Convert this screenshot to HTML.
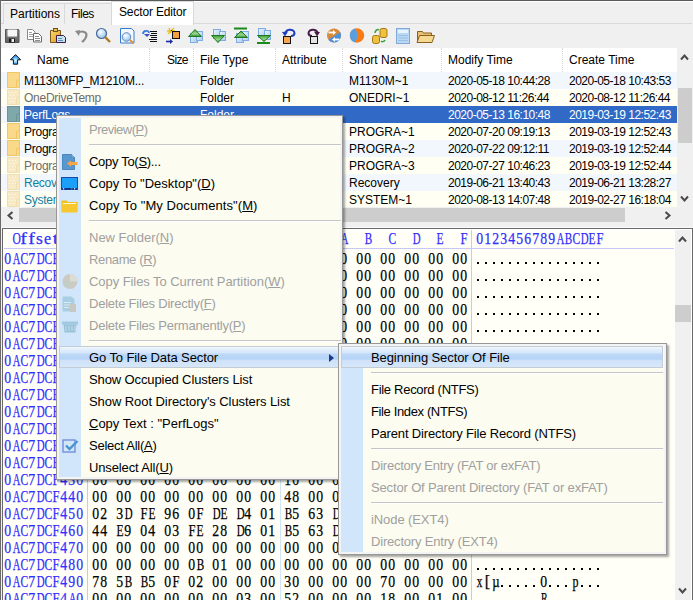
<!DOCTYPE html><html><head><meta charset="utf-8"><style>
*{margin:0;padding:0;box-sizing:border-box}
html,body{width:693px;height:600px;overflow:hidden;background:#f0f0f0;font-family:"Liberation Sans",sans-serif;font-size:12px;color:#000}
.a{position:absolute}
.t{position:absolute;white-space:pre;line-height:1}
.m{font-family:"Liberation Mono",monospace}
.hx{font-family:"Liberation Serif",serif;font-size:16px;-webkit-text-stroke:0.25px currentColor}
.hx i{font-style:normal;display:inline-block;width:8px;text-align:center}
.hx i.p{position:relative}
.hx i.p::after{content:"";position:absolute;left:1px;top:11px;width:2px;height:2px;background:#000}
.hx i.d{transform:translateX(-0.3px) scaleX(0.86)}
</style></head><body>
<div class="a" style="left:0px;top:0px;width:693px;height:1px;background:#5a5a5a"></div>
<div class="a" style="left:0px;top:1px;width:693px;height:1px;background:#fff"></div>
<div class="a" style="left:0px;top:0px;width:1px;height:600px;background:#6a6a6a"></div>
<div class="a" style="left:1px;top:23px;width:691px;height:1px;background:#d9d9d9"></div>
<div class="a" style="left:3px;top:3px;width:62px;height:21px;background:#f0f0f0;border:1px solid #d9d9d9;border-bottom:none"></div>
<div class="a" style="left:64px;top:3px;width:48px;height:21px;background:#f0f0f0;border:1px solid #d9d9d9;border-bottom:none"></div>
<div class="a" style="left:111px;top:1px;width:83px;height:24px;background:#fff;border:1px solid #d9d9d9;border-bottom:none"></div>
<div class="t" style="left:10px;top:8px;font-size:12px;color:#000;">Partitions</div>
<div class="t" style="left:71px;top:8px;font-size:12px;color:#000;letter-spacing:-0.5px">Files</div>
<div class="t" style="left:119px;top:6px;font-size:12px;color:#000;letter-spacing:-0.15px">Sector Editor</div>
<svg class="a" style="left:0;top:0" width="693" height="72">
<defs>
<linearGradient id="gy" x1="0" y1="0" x2="1" y2="1"><stop offset="0" stop-color="#ffe07a"/><stop offset="1" stop-color="#e0a020"/></linearGradient>
<linearGradient id="gb" x1="0" y1="0" x2="1" y2="1"><stop offset="0" stop-color="#eaf4ff"/><stop offset="1" stop-color="#a8cdf0"/></linearGradient>
<radialGradient id="gl" cx="0.4" cy="0.35" r="0.7"><stop offset="0" stop-color="#ffffff"/><stop offset="1" stop-color="#8cc0e8"/></radialGradient>
</defs>
<!-- 1 floppy -->
<linearGradient id="gf" x1="0" y1="0" x2="0" y2="1"><stop offset="0" stop-color="#8c8c8c"/><stop offset="1" stop-color="#5e5e5e"/></linearGradient>
<path d="M5.5 29.5h13l0.5 0.5v12.5h-13.5z" fill="url(#gf)" stroke="#555"/>
<rect x="7.5" y="29.5" width="9.5" height="7" fill="#f6f6f6"/>
<rect x="9" y="38.5" width="6" height="4" fill="#1a1a1a"/><rect x="11.5" y="39" width="2.5" height="3" fill="#f0f0f0"/>
<!-- 2 copy -->
<path d="M27.5 29.5h5l2.5 2.5v7.5h-7.5z" fill="#fff" stroke="#8a8a8a"/>
<path d="M29 32.5h3M29 34.5h4M29 36.5h4" stroke="#a0a0a0"/>
<path d="M33.5 33.5h5l3 3v5.5h-8z" fill="#fff" stroke="#6a6a6a"/>
<path d="M35 36.5h4M35 38.5h5M35 40.5h5" stroke="#8a8a8a"/>
<!-- 3 paste -->
<linearGradient id="gp" x1="0" y1="0" x2="1" y2="1"><stop offset="0" stop-color="#f8d870"/><stop offset="1" stop-color="#e09818"/></linearGradient>
<path d="M50.5 30.5h10v12h-10z" fill="url(#gp)" stroke="#7a5a20"/>
<rect x="53.5" y="28.5" width="4" height="3" fill="#e8c060" stroke="#6a5020"/>
<path d="M56.5 35.5h7l2 2v5h-9z" fill="#c8e2f2" stroke="#3a1a4a"/>
<path d="M58 38.5h4M58 40.5h5" stroke="#5a8ab0"/>
<!-- 4 undo gray -->
<path d="M78 33 C 82 30, 88 32, 86 37 C 85 40, 83 41, 82 42" fill="none" stroke="#8a8a8a" stroke-width="2.2"/>
<path d="M75 31 L80 30 L79 36 Z" fill="#8a8a8a"/>
<!-- 5 magnifier -->
<circle cx="101.5" cy="33.5" r="5" fill="url(#gl)" stroke="#4a6a9a" stroke-width="1.2"/>
<path d="M105 37 L110 42" stroke="#b07820" stroke-width="2.4"/>
<!-- 6 doc magnifier -->
<path d="M120.5 28.5h11l2.5 2.5v12h-13.5z" fill="#f4f9ff" stroke="#3a7ad0"/>
<circle cx="126.5" cy="37" r="4.3" fill="url(#gl)" stroke="#5a8ac0"/>
<path d="M130 40 L133 43" stroke="#d89030" stroke-width="2"/>
<!-- 7 list with arrow -->
<path d="M143 34 C 143 30, 149 30, 149 33" fill="none" stroke="#3a7ae0" stroke-width="1.8"/>
<path d="M144 34 h6 l-3 3z" fill="#3a50c0"/>
<path d="M150 31.5h7M151 33.5h6M150 35.5h7M151 37.5h6M149 39.5h8M150 41.5h7" stroke="#111"/>
<!-- 8 spark box -->
<path d="M169 28 L171 33 M167 31 L175 31 M168 34 L174 28" stroke="#e8c020" stroke-width="1.4"/>
<path d="M171 30 l2 2" stroke="#222"/>
<rect x="172.5" y="31.5" width="7" height="7" fill="#f5a040" stroke="#111"/>
<path d="M166 41.5 h5" stroke="#1a2aa0" stroke-width="1.6"/><path d="M170 39 l3 2.5 l-3 2.5z" fill="#1a2aa0"/>
<!-- 9 green up -->
<linearGradient id="gg" x1="0" y1="0" x2="0" y2="1"><stop offset="0" stop-color="#3a9a30"/><stop offset="0.6" stop-color="#9ad890"/><stop offset="1" stop-color="#2a8a2a"/></linearGradient>
<rect x="190.5" y="33.5" width="7" height="9" fill="url(#gb)" stroke="#80acdf"/>
<rect x="196.5" y="31.5" width="6" height="9" fill="url(#gb)" stroke="#80acdf"/>
<path d="M188.5 36.5 L195 29.5 L201.5 36.5 Z" fill="url(#gg)" stroke="#1f7a1f"/>
<!-- 10 green down -->
<rect x="213.5" y="29.5" width="7" height="9" fill="url(#gb)" stroke="#80acdf"/>
<rect x="219.5" y="31.5" width="6" height="9" fill="url(#gb)" stroke="#80acdf"/>
<path d="M211.5 35.5 L224.5 35.5 L218 42.5 Z" fill="url(#gg)" stroke="#1f7a1f"/>
<!-- 11 green up top bar -->
<rect x="236.5" y="33.5" width="7" height="9" fill="url(#gb)" stroke="#80acdf"/>
<rect x="242.5" y="31.5" width="6" height="9" fill="url(#gb)" stroke="#80acdf"/>
<rect x="234" y="27.5" width="13" height="2" fill="#1a8a1a"/>
<path d="M234.5 37.5 L241 31 L247.5 37.5 Z" fill="url(#gg)" stroke="#1f7a1f"/>
<!-- 12 green down bottom bar -->
<rect x="258.5" y="28.5" width="7" height="9" fill="url(#gb)" stroke="#80acdf"/>
<rect x="264.5" y="30.5" width="6" height="9" fill="url(#gb)" stroke="#80acdf"/>
<path d="M257.5 35.5 L270.5 35.5 L264 41.5 Z" fill="url(#gg)" stroke="#1f7a1f"/>
<rect x="257" y="42" width="13" height="2" fill="#1a8a1a"/>
<!-- 13 undo box -->
<path d="M285.5 34 C 285 29, 294 28, 294.5 33 C 294.5 35, 293 36, 291 36" fill="none" stroke="#1f3fc0" stroke-width="2"/>
<path d="M282 32 L288 31.5 L285 36.5Z" fill="#1f3fc0"/>
<rect x="283.5" y="36.5" width="7" height="7" fill="#f5a850" stroke="#111"/>
<!-- 14 redo box -->
<path d="M317.5 34 C 318 29, 309 28, 308.5 33 C 308.5 35, 310 36, 312 36" fill="none" stroke="#4a1a4a" stroke-width="2"/>
<path d="M320 32 L314 31.5 L317 36.5Z" fill="#4a1a4a"/>
<rect x="310.5" y="36.5" width="7" height="7" fill="#e4e4e4" stroke="#111"/>
<!-- 15 disc orange/blue -->
<clipPath id="cd15"><circle cx="334" cy="35.5" r="7"/></clipPath>
<g clip-path="url(#cd15)">
<rect x="326" y="28" width="16" height="16" fill="#d88a3a"/>
<path d="M326 41 L342 31 L342 44 L326 44Z" fill="#4a92dc"/>
</g>
<path d="M328.5 32.5 h5" stroke="#fff" stroke-width="1.8"/><path d="M333 30 l3 2.5 l-3 2.5z" fill="#fff"/>
<path d="M339.5 39.5 h-5" stroke="#fff" stroke-width="1.8"/><path d="M335 37 l-3 2.5 l3 2.5z" fill="#fff"/>
<!-- 16 orange disc -->
<circle cx="357" cy="35.5" r="7.2" fill="#f87c14"/>
<path d="M355 28.6 A7.2 7.2 0 0 0 355 42.4 C 358 39, 358 32, 355 28.6Z" fill="#5a9ee0"/>
<!-- 17 db arrows -->
<rect x="380" y="28.5" width="7" height="9" rx="2" fill="#f0c040" stroke="#a07a10"/>
<rect x="372.5" y="35.5" width="7" height="8" rx="2" fill="#f0c040" stroke="#a07a10"/>
<path d="M375 33 C 375 30, 378 29, 379 30" fill="none" stroke="#3aa040" stroke-width="1.5"/>
<path d="M385 40 C 384 42, 382 42, 381 41" fill="none" stroke="#3aa040" stroke-width="1.5"/>
<!-- 18 calculator -->
<rect x="396.5" y="28.5" width="13" height="15" fill="#b8d8f4" stroke="#80a8d8"/>
<rect x="398" y="30" width="10" height="3" fill="#e8f4ff"/>
<path d="M398 35.5h10M398 38h10M398 40.5h10" stroke="#9cc0e4"/>
<!-- 19 open folder -->
<path d="M417.5 31.5h5l1 1.5h8v8h-14z" fill="#e8c070" stroke="#8a6020"/>
<path d="M419.5 35.5h15l-2.5 7h-15z" fill="#f6d890" stroke="#8a6020"/>
</svg>
<div class="a" style="left:1px;top:48px;width:676px;height:24px;background:#fff"></div>
<div class="a" style="left:149px;top:48px;width:1px;height:24px;border-left:1px dotted #d8d8d8"></div>
<div class="a" style="left:193px;top:48px;width:1px;height:24px;border-left:1px dotted #d8d8d8"></div>
<div class="a" style="left:275px;top:48px;width:1px;height:24px;border-left:1px dotted #d8d8d8"></div>
<div class="a" style="left:342px;top:48px;width:1px;height:24px;border-left:1px dotted #d8d8d8"></div>
<div class="a" style="left:441px;top:48px;width:1px;height:24px;border-left:1px dotted #d8d8d8"></div>
<div class="a" style="left:562px;top:48px;width:1px;height:24px;border-left:1px dotted #d8d8d8"></div>
<svg class="a" style="left:0;top:0" width="30" height="72"><!-- header up arrow -->
<radialGradient id="ga" cx="0.5" cy="0.6" r="0.55"><stop offset="0" stop-color="#ffffff"/><stop offset="0.45" stop-color="#6cc0ff"/><stop offset="1" stop-color="#1a80f0"/></radialGradient>
<path d="M15.5 54.6 L20.6 59.8 L17.6 59.8 L17.6 64.2 L13.4 64.2 L13.4 59.8 L10.4 59.8 Z" fill="url(#ga)" stroke="#000" stroke-width="0.9" stroke-linejoin="miter"/>
</svg>
<div class="t" style="left:37px;top:54px;font-size:12px;color:#000;">Name</div>
<div class="t" style="left:167px;top:54px;font-size:12px;color:#000;letter-spacing:-0.6px">Size</div>
<div class="t" style="left:200px;top:54px;font-size:12px;color:#000;">File Type</div>
<div class="t" style="left:282px;top:54px;font-size:12px;color:#000;">Attribute</div>
<div class="t" style="left:349px;top:54px;font-size:12px;color:#000;">Short Name</div>
<div class="t" style="left:448px;top:54px;font-size:12px;color:#000;">Modify Time</div>
<div class="t" style="left:569px;top:54px;font-size:12px;color:#000;">Create Time</div>
<div class="a" style="left:1px;top:72px;width:676px;height:17px;background:#f2f7fd"></div>
<svg class="a" style="left:6px;top:72px" width="15" height="17"><rect x="1.5" y="0.5" width="12" height="15" fill="#fbd98a" stroke="#efc764"/><path d="M10.5 15.5 V8.5 Q12 7 13.5 8.5 V15.5" fill="#fbd98a" stroke="#efc764"/></svg>
<div class="t" style="left:24px;top:75px;font-size:12px;color:#000;letter-spacing:-0.25px">M1130MFP_M1210M...</div>
<div class="t" style="left:200px;top:75px;font-size:12px;color:#000;">Folder</div>
<div class="t" style="left:282px;top:75px;font-size:12px;color:#000;"></div>
<div class="t" style="left:349px;top:75px;font-size:12px;color:#000;">M1130M~1</div>
<div class="t" style="left:448px;top:75px;font-size:12px;color:#000;letter-spacing:-0.5px">2020-05-18 10:44:28</div>
<div class="t" style="left:569px;top:75px;font-size:12px;color:#000;letter-spacing:-0.5px">2020-05-18 10:43:53</div>
<div class="a" style="left:1px;top:89px;width:676px;height:17px;background:#fffff4"></div>
<svg class="a" style="left:6px;top:89px" width="15" height="17"><rect x="1.5" y="0.5" width="12" height="15" fill="#f6e9c4" stroke="#efdfb0"/><path d="M10.5 15.5 V8.5 Q12 7 13.5 8.5 V15.5" fill="#f6e9c4" stroke="#efdfb0"/></svg>
<svg class="a" style="left:6px;top:89px" width="15" height="17"><g fill="#fffaf0"><rect x="3" y="3" width="1" height="1"/><rect x="6" y="3" width="1" height="1"/><rect x="9" y="3" width="1" height="1"/><rect x="4" y="6" width="1" height="1"/><rect x="7" y="6" width="1" height="1"/><rect x="3" y="9" width="1" height="1"/><rect x="6" y="9" width="1" height="1"/><rect x="9" y="9" width="1" height="1"/><rect x="4" y="12" width="1" height="1"/><rect x="7" y="12" width="1" height="1"/></g></svg>
<div class="t" style="left:24px;top:92px;font-size:12px;color:#6d6d6d;letter-spacing:-0.25px">OneDriveTemp</div>
<div class="t" style="left:200px;top:92px;font-size:12px;color:#000;">Folder</div>
<div class="t" style="left:282px;top:92px;font-size:12px;color:#000;">H</div>
<div class="t" style="left:349px;top:92px;font-size:12px;color:#000;">ONEDRI~1</div>
<div class="t" style="left:448px;top:92px;font-size:12px;color:#000;letter-spacing:-0.5px">2020-08-12 11:26:44</div>
<div class="t" style="left:569px;top:92px;font-size:12px;color:#000;letter-spacing:-0.5px">2020-08-12 11:26:44</div>
<div class="a" style="left:1px;top:106px;width:676px;height:17px;background:#f2f7fd"></div>
<div class="a" style="left:24px;top:106px;width:653px;height:17px;background:#3169c6"></div>
<svg class="a" style="left:6px;top:106px" width="15" height="17"><rect x="1.5" y="0.5" width="12" height="15" fill="#7fa8aa" stroke="#6a9496"/><path d="M10.5 15.5 V8.5 Q12 7 13.5 8.5 V15.5" fill="#7fa8aa" stroke="#6a9496"/></svg>
<div class="t" style="left:24px;top:109px;font-size:12px;color:#fff;letter-spacing:-0.25px">PerfLogs</div>
<div class="t" style="left:200px;top:109px;font-size:12px;color:#fff;">Folder</div>
<div class="t" style="left:282px;top:109px;font-size:12px;color:#fff;"></div>
<div class="t" style="left:349px;top:109px;font-size:12px;color:#fff;"></div>
<div class="t" style="left:448px;top:109px;font-size:12px;color:#fff;letter-spacing:-0.5px">2020-05-13 16:10:48</div>
<div class="t" style="left:569px;top:109px;font-size:12px;color:#fff;letter-spacing:-0.5px">2019-03-19 12:52:43</div>
<div class="a" style="left:1px;top:123px;width:676px;height:17px;background:#fffff4"></div>
<svg class="a" style="left:6px;top:123px" width="15" height="17"><rect x="1.5" y="0.5" width="12" height="15" fill="#fbd98a" stroke="#efc764"/><path d="M10.5 15.5 V8.5 Q12 7 13.5 8.5 V15.5" fill="#fbd98a" stroke="#efc764"/></svg>
<div class="t" style="left:24px;top:126px;font-size:12px;color:#000;letter-spacing:-0.25px">Program Files</div>
<div class="t" style="left:200px;top:126px;font-size:12px;color:#000;">Folder</div>
<div class="t" style="left:282px;top:126px;font-size:12px;color:#000;"></div>
<div class="t" style="left:349px;top:126px;font-size:12px;color:#000;">PROGRA~1</div>
<div class="t" style="left:448px;top:126px;font-size:12px;color:#000;letter-spacing:-0.5px">2020-07-20 09:19:13</div>
<div class="t" style="left:569px;top:126px;font-size:12px;color:#000;letter-spacing:-0.5px">2019-03-19 12:52:43</div>
<div class="a" style="left:1px;top:140px;width:676px;height:17px;background:#f2f7fd"></div>
<svg class="a" style="left:6px;top:140px" width="15" height="17"><rect x="1.5" y="0.5" width="12" height="15" fill="#fbd98a" stroke="#efc764"/><path d="M10.5 15.5 V8.5 Q12 7 13.5 8.5 V15.5" fill="#fbd98a" stroke="#efc764"/></svg>
<div class="t" style="left:24px;top:143px;font-size:12px;color:#000;letter-spacing:-0.25px">Program Files (x86)</div>
<div class="t" style="left:200px;top:143px;font-size:12px;color:#000;">Folder</div>
<div class="t" style="left:282px;top:143px;font-size:12px;color:#000;"></div>
<div class="t" style="left:349px;top:143px;font-size:12px;color:#000;">PROGRA~2</div>
<div class="t" style="left:448px;top:143px;font-size:12px;color:#000;letter-spacing:-0.5px">2020-07-22 09:12:11</div>
<div class="t" style="left:569px;top:143px;font-size:12px;color:#000;letter-spacing:-0.5px">2019-03-19 12:52:44</div>
<div class="a" style="left:1px;top:157px;width:676px;height:17px;background:#fffff4"></div>
<svg class="a" style="left:6px;top:157px" width="15" height="17"><rect x="1.5" y="0.5" width="12" height="15" fill="#f6e9c4" stroke="#efdfb0"/><path d="M10.5 15.5 V8.5 Q12 7 13.5 8.5 V15.5" fill="#f6e9c4" stroke="#efdfb0"/></svg>
<svg class="a" style="left:6px;top:157px" width="15" height="17"><g fill="#fffaf0"><rect x="3" y="3" width="1" height="1"/><rect x="6" y="3" width="1" height="1"/><rect x="9" y="3" width="1" height="1"/><rect x="4" y="6" width="1" height="1"/><rect x="7" y="6" width="1" height="1"/><rect x="3" y="9" width="1" height="1"/><rect x="6" y="9" width="1" height="1"/><rect x="9" y="9" width="1" height="1"/><rect x="4" y="12" width="1" height="1"/><rect x="7" y="12" width="1" height="1"/></g></svg>
<div class="t" style="left:24px;top:160px;font-size:12px;color:#6d6d6d;letter-spacing:-0.25px">ProgramData</div>
<div class="t" style="left:200px;top:160px;font-size:12px;color:#000;">Folder</div>
<div class="t" style="left:282px;top:160px;font-size:12px;color:#000;">H</div>
<div class="t" style="left:349px;top:160px;font-size:12px;color:#000;">PROGRA~3</div>
<div class="t" style="left:448px;top:160px;font-size:12px;color:#000;letter-spacing:-0.5px">2020-07-27 10:46:23</div>
<div class="t" style="left:569px;top:160px;font-size:12px;color:#000;letter-spacing:-0.5px">2019-03-19 12:52:44</div>
<div class="a" style="left:1px;top:174px;width:676px;height:17px;background:#f2f7fd"></div>
<svg class="a" style="left:6px;top:174px" width="15" height="17"><rect x="1.5" y="0.5" width="12" height="15" fill="#f6e9c4" stroke="#efdfb0"/><path d="M10.5 15.5 V8.5 Q12 7 13.5 8.5 V15.5" fill="#f6e9c4" stroke="#efdfb0"/></svg>
<svg class="a" style="left:6px;top:174px" width="15" height="17"><g fill="#fffaf0"><rect x="3" y="3" width="1" height="1"/><rect x="6" y="3" width="1" height="1"/><rect x="9" y="3" width="1" height="1"/><rect x="4" y="6" width="1" height="1"/><rect x="7" y="6" width="1" height="1"/><rect x="3" y="9" width="1" height="1"/><rect x="6" y="9" width="1" height="1"/><rect x="9" y="9" width="1" height="1"/><rect x="4" y="12" width="1" height="1"/><rect x="7" y="12" width="1" height="1"/></g></svg>
<div class="t" style="left:24px;top:177px;font-size:12px;color:#157d9e;letter-spacing:-0.25px">Recovery</div>
<div class="t" style="left:200px;top:177px;font-size:12px;color:#000;">Folder</div>
<div class="t" style="left:282px;top:177px;font-size:12px;color:#000;">HS</div>
<div class="t" style="left:349px;top:177px;font-size:12px;color:#000;">Recovery</div>
<div class="t" style="left:448px;top:177px;font-size:12px;color:#000;letter-spacing:-0.5px">2019-06-21 13:40:43</div>
<div class="t" style="left:569px;top:177px;font-size:12px;color:#000;letter-spacing:-0.5px">2019-06-21 13:28:27</div>
<div class="a" style="left:1px;top:191px;width:676px;height:17px;background:#fffff4"></div>
<svg class="a" style="left:6px;top:191px" width="15" height="17"><rect x="1.5" y="0.5" width="12" height="15" fill="#f6e9c4" stroke="#efdfb0"/><path d="M10.5 15.5 V8.5 Q12 7 13.5 8.5 V15.5" fill="#f6e9c4" stroke="#efdfb0"/></svg>
<svg class="a" style="left:6px;top:191px" width="15" height="17"><g fill="#fffaf0"><rect x="3" y="3" width="1" height="1"/><rect x="6" y="3" width="1" height="1"/><rect x="9" y="3" width="1" height="1"/><rect x="4" y="6" width="1" height="1"/><rect x="7" y="6" width="1" height="1"/><rect x="3" y="9" width="1" height="1"/><rect x="6" y="9" width="1" height="1"/><rect x="9" y="9" width="1" height="1"/><rect x="4" y="12" width="1" height="1"/><rect x="7" y="12" width="1" height="1"/></g></svg>
<div class="t" style="left:24px;top:194px;font-size:12px;color:#157d9e;letter-spacing:-0.25px">System Volume Information</div>
<div class="t" style="left:200px;top:194px;font-size:12px;color:#000;">Folder</div>
<div class="t" style="left:282px;top:194px;font-size:12px;color:#000;">HS</div>
<div class="t" style="left:349px;top:194px;font-size:12px;color:#000;">SYSTEM~1</div>
<div class="t" style="left:448px;top:194px;font-size:12px;color:#000;letter-spacing:-0.5px">2020-08-13 14:07:48</div>
<div class="t" style="left:569px;top:194px;font-size:12px;color:#000;letter-spacing:-0.5px">2019-02-27 16:18:04</div>
<div class="a" style="left:677px;top:48px;width:15px;height:160px;background:#f0f0f0"></div>
<div class="a" style="left:678px;top:88px;width:14px;height:55px;background:#cdcdcd"></div>
<div class="a" style="left:1px;top:207px;width:676px;height:16px;background:#f0f0f0"></div>
<div class="a" style="left:19px;top:208px;width:606px;height:14px;background:#cdcdcd"></div>
<div class="a" style="left:677px;top:207px;width:15px;height:16px;background:#f0f0f0"></div>
<div class="a" style="left:1px;top:227px;width:692px;height:1px;background:#fafafa"></div>
<div class="a" style="left:2px;top:228px;width:691px;height:372px;background:#fffff8;border-left:1px solid #696969;border-top:1px solid #696969;border-right:1px solid #696969"></div>
<div class="a" style="left:3px;top:229px;width:689px;height:1px;background:#fff"></div>
<div class="a" style="left:3px;top:229px;width:1px;height:371px;background:#fff"></div>
<div class="a" style="left:691px;top:229px;width:1px;height:371px;background:#fff"></div>
<div class="a" style="left:674px;top:230px;width:1px;height:370px;background:#fff"></div>
<div class="a" style="left:675px;top:230px;width:16px;height:370px;background:#f0f0f0"></div>
<div class="a" style="left:675px;top:305px;width:16px;height:17px;background:#cdcdcd"></div>
<div class="a" style="left:4px;top:248px;width:670px;height:1px;background:#c8c8f8"></div>
<div class="a" style="left:87px;top:249px;width:1px;height:351px;background:#c8c8f8"></div>
<div class="a" style="left:280px;top:249px;width:1px;height:351px;background:#d0e4fa"></div>
<div class="a" style="left:471px;top:230px;width:1px;height:370px;background:#c8c8f8"></div>
<svg class="a" style="left:0;top:0" width="693" height="260">
<path d="M681 59.5 L684.5 55.5 L688 59.5" fill="none" stroke="#4a4a4a" stroke-width="2"/>
<path d="M681 196.5 L684.5 200.5 L688 196.5" fill="none" stroke="#4a4a4a" stroke-width="2"/>
<path d="M670.5 212 L666.5 215.5 L670.5 219" fill="none" stroke="#4a4a4a" stroke-width="2" transform="translate(336 0) scale(-1 1) translate(-1000 0)"/>
<path d="M12.5 212 L8.5 215.5 L12.5 219" fill="none" stroke="#4a4a4a" stroke-width="2"/>
<path d="M679 241.5 L682.5 237.5 L686 241.5" fill="none" stroke="#4a4a4a" stroke-width="2"/>
</svg>
<svg class="a" style="left:0;top:0" width="693" height="600"><path d="M679 588.5 L682.5 592.5 L686 588.5" fill="none" stroke="#4a4a4a" stroke-width="2"/>
</svg>
<div class="t hx" style="left:4px;top:231px"><span style="color:#3030ff"><i> </i><i style="transform:translateX(-0.5px) scaleX(0.72)">O</i><i style="transform:translateX(-0.5px) scaleX(1.25)">f</i><i style="transform:translateX(-0.5px) scaleX(1.25)">f</i><i style="transform:translateX(-0.5px) scaleX(1.1)">s</i><i style="transform:translateX(-0.5px) scaleX(1.0)">e</i><i style="transform:translateX(-0.5px) scaleX(1.25)">t</i><i> </i><i> </i><i> </i><i> </i><i> </i><i class="d">0</i><i> </i><i> </i><i class="d">1</i><i> </i><i> </i><i class="d">2</i><i> </i><i> </i><i class="d">3</i><i> </i><i> </i><i class="d">4</i><i> </i><i> </i><i class="d">5</i><i> </i><i> </i><i class="d">6</i><i> </i><i> </i><i class="d">7</i><i> </i><i> </i><i class="d">8</i><i> </i><i> </i><i class="d">9</i><i> </i><i> </i><i style="transform:translateX(-0.5px) scaleX(0.66)">A</i><i> </i><i> </i><i style="transform:translateX(-0.5px) scaleX(0.7)">B</i><i> </i><i> </i><i style="transform:translateX(-0.5px) scaleX(0.72)">C</i><i> </i><i> </i><i style="transform:translateX(-0.5px) scaleX(0.68)">D</i><i> </i><i> </i><i style="transform:translateX(-0.5px) scaleX(0.72)">E</i><i> </i><i> </i><i style="transform:translateX(-0.5px) scaleX(0.78)">F</i><i> </i><i class="d">0</i><i class="d">1</i><i class="d">2</i><i class="d">3</i><i class="d">4</i><i class="d">5</i><i class="d">6</i><i class="d">7</i><i class="d">8</i><i class="d">9</i><i style="transform:translateX(-0.5px) scaleX(0.66)">A</i><i style="transform:translateX(-0.5px) scaleX(0.7)">B</i><i style="transform:translateX(-0.5px) scaleX(0.72)">C</i><i style="transform:translateX(-0.5px) scaleX(0.68)">D</i><i style="transform:translateX(-0.5px) scaleX(0.72)">E</i><i style="transform:translateX(-0.5px) scaleX(0.78)">F</i></span></div>
<div class="t hx" style="left:4px;top:251px"><span style="color:#3030ff"><i class="d">0</i><i style="transform:translateX(-0.5px) scaleX(0.66)">A</i><i style="transform:translateX(-0.5px) scaleX(0.72)">C</i><i class="d">7</i><i style="transform:translateX(-0.5px) scaleX(0.68)">D</i><i style="transform:translateX(-0.5px) scaleX(0.72)">C</i><i style="transform:translateX(-0.5px) scaleX(0.78)">F</i><i class="d">3</i><i class="d">6</i><i class="d">0</i></span><i> </i><i class="d">0</i><i class="d">0</i><i> </i><i class="d">0</i><i class="d">0</i><i> </i><i class="d">0</i><i class="d">0</i><i> </i><i class="d">0</i><i class="d">0</i><i> </i><i class="d">0</i><i class="d">0</i><i> </i><i class="d">0</i><i class="d">0</i><i> </i><i class="d">0</i><i class="d">0</i><i> </i><i class="d">0</i><i class="d">0</i><i> </i><i class="d">0</i><i class="d">0</i><i> </i><i class="d">0</i><i class="d">0</i><i> </i><i class="d">0</i><i class="d">0</i><i> </i><i class="d">0</i><i class="d">0</i><i> </i><i class="d">0</i><i class="d">0</i><i> </i><i class="d">0</i><i class="d">0</i><i> </i><i class="d">0</i><i class="d">0</i><i> </i><i class="d">0</i><i class="d">0</i><i> </i><i class="p"> </i><i class="p"> </i><i class="p"> </i><i class="p"> </i><i class="p"> </i><i class="p"> </i><i class="p"> </i><i class="p"> </i><i class="p"> </i><i class="p"> </i><i class="p"> </i><i class="p"> </i><i class="p"> </i><i class="p"> </i><i class="p"> </i><i class="p"> </i></div>
<div class="t hx" style="left:4px;top:268px"><span style="color:#3030ff"><i class="d">0</i><i style="transform:translateX(-0.5px) scaleX(0.66)">A</i><i style="transform:translateX(-0.5px) scaleX(0.72)">C</i><i class="d">7</i><i style="transform:translateX(-0.5px) scaleX(0.68)">D</i><i style="transform:translateX(-0.5px) scaleX(0.72)">C</i><i style="transform:translateX(-0.5px) scaleX(0.78)">F</i><i class="d">3</i><i class="d">7</i><i class="d">0</i></span><i> </i><i class="d">0</i><i class="d">0</i><i> </i><i class="d">0</i><i class="d">0</i><i> </i><i class="d">0</i><i class="d">0</i><i> </i><i class="d">0</i><i class="d">0</i><i> </i><i class="d">0</i><i class="d">0</i><i> </i><i class="d">0</i><i class="d">0</i><i> </i><i class="d">0</i><i class="d">0</i><i> </i><i class="d">0</i><i class="d">0</i><i> </i><i class="d">0</i><i class="d">0</i><i> </i><i class="d">0</i><i class="d">0</i><i> </i><i class="d">0</i><i class="d">0</i><i> </i><i class="d">0</i><i class="d">0</i><i> </i><i class="d">0</i><i class="d">0</i><i> </i><i class="d">0</i><i class="d">0</i><i> </i><i class="d">0</i><i class="d">0</i><i> </i><i class="d">0</i><i class="d">0</i><i> </i><i class="p"> </i><i class="p"> </i><i class="p"> </i><i class="p"> </i><i class="p"> </i><i class="p"> </i><i class="p"> </i><i class="p"> </i><i class="p"> </i><i class="p"> </i><i class="p"> </i><i class="p"> </i><i class="p"> </i><i class="p"> </i><i class="p"> </i><i class="p"> </i></div>
<div class="t hx" style="left:4px;top:285px"><span style="color:#3030ff"><i class="d">0</i><i style="transform:translateX(-0.5px) scaleX(0.66)">A</i><i style="transform:translateX(-0.5px) scaleX(0.72)">C</i><i class="d">7</i><i style="transform:translateX(-0.5px) scaleX(0.68)">D</i><i style="transform:translateX(-0.5px) scaleX(0.72)">C</i><i style="transform:translateX(-0.5px) scaleX(0.78)">F</i><i class="d">3</i><i class="d">8</i><i class="d">0</i></span><i> </i><i class="d">0</i><i class="d">0</i><i> </i><i class="d">0</i><i class="d">0</i><i> </i><i class="d">0</i><i class="d">0</i><i> </i><i class="d">0</i><i class="d">0</i><i> </i><i class="d">0</i><i class="d">0</i><i> </i><i class="d">0</i><i class="d">0</i><i> </i><i class="d">0</i><i class="d">0</i><i> </i><i class="d">0</i><i class="d">0</i><i> </i><i class="d">0</i><i class="d">0</i><i> </i><i class="d">0</i><i class="d">0</i><i> </i><i class="d">0</i><i class="d">0</i><i> </i><i class="d">0</i><i class="d">0</i><i> </i><i class="d">0</i><i class="d">0</i><i> </i><i class="d">0</i><i class="d">0</i><i> </i><i class="d">0</i><i class="d">0</i><i> </i><i class="d">0</i><i class="d">0</i><i> </i><i class="p"> </i><i class="p"> </i><i class="p"> </i><i class="p"> </i><i class="p"> </i><i class="p"> </i><i class="p"> </i><i class="p"> </i><i class="p"> </i><i class="p"> </i><i class="p"> </i><i class="p"> </i><i class="p"> </i><i class="p"> </i><i class="p"> </i><i class="p"> </i></div>
<div class="t hx" style="left:4px;top:302px"><span style="color:#3030ff"><i class="d">0</i><i style="transform:translateX(-0.5px) scaleX(0.66)">A</i><i style="transform:translateX(-0.5px) scaleX(0.72)">C</i><i class="d">7</i><i style="transform:translateX(-0.5px) scaleX(0.68)">D</i><i style="transform:translateX(-0.5px) scaleX(0.72)">C</i><i style="transform:translateX(-0.5px) scaleX(0.78)">F</i><i class="d">3</i><i class="d">9</i><i class="d">0</i></span><i> </i><i class="d">0</i><i class="d">0</i><i> </i><i class="d">0</i><i class="d">0</i><i> </i><i class="d">0</i><i class="d">0</i><i> </i><i class="d">0</i><i class="d">0</i><i> </i><i class="d">0</i><i class="d">0</i><i> </i><i class="d">0</i><i class="d">0</i><i> </i><i class="d">0</i><i class="d">0</i><i> </i><i class="d">0</i><i class="d">0</i><i> </i><i class="d">0</i><i class="d">0</i><i> </i><i class="d">0</i><i class="d">0</i><i> </i><i class="d">0</i><i class="d">0</i><i> </i><i class="d">0</i><i class="d">0</i><i> </i><i class="d">0</i><i class="d">0</i><i> </i><i class="d">0</i><i class="d">0</i><i> </i><i class="d">0</i><i class="d">0</i><i> </i><i class="d">0</i><i class="d">0</i><i> </i><i class="p"> </i><i class="p"> </i><i class="p"> </i><i class="p"> </i><i class="p"> </i><i class="p"> </i><i class="p"> </i><i class="p"> </i><i class="p"> </i><i class="p"> </i><i class="p"> </i><i class="p"> </i><i class="p"> </i><i class="p"> </i><i class="p"> </i><i class="p"> </i></div>
<div class="t hx" style="left:4px;top:319px"><span style="color:#3030ff"><i class="d">0</i><i style="transform:translateX(-0.5px) scaleX(0.66)">A</i><i style="transform:translateX(-0.5px) scaleX(0.72)">C</i><i class="d">7</i><i style="transform:translateX(-0.5px) scaleX(0.68)">D</i><i style="transform:translateX(-0.5px) scaleX(0.72)">C</i><i style="transform:translateX(-0.5px) scaleX(0.78)">F</i><i class="d">3</i><i style="transform:translateX(-0.5px) scaleX(0.66)">A</i><i class="d">0</i></span><i> </i><i class="d">0</i><i class="d">0</i><i> </i><i class="d">0</i><i class="d">0</i><i> </i><i class="d">0</i><i class="d">0</i><i> </i><i class="d">0</i><i class="d">0</i><i> </i><i class="d">0</i><i class="d">0</i><i> </i><i class="d">0</i><i class="d">0</i><i> </i><i class="d">0</i><i class="d">0</i><i> </i><i class="d">0</i><i class="d">0</i><i> </i><i class="d">0</i><i class="d">0</i><i> </i><i class="d">0</i><i class="d">0</i><i> </i><i class="d">0</i><i class="d">0</i><i> </i><i class="d">0</i><i class="d">0</i><i> </i><i class="d">0</i><i class="d">0</i><i> </i><i class="d">0</i><i class="d">0</i><i> </i><i class="d">0</i><i class="d">0</i><i> </i><i class="d">0</i><i class="d">0</i><i> </i><i class="p"> </i><i class="p"> </i><i class="p"> </i><i class="p"> </i><i class="p"> </i><i class="p"> </i><i class="p"> </i><i class="p"> </i><i class="p"> </i><i class="p"> </i><i class="p"> </i><i class="p"> </i><i class="p"> </i><i class="p"> </i><i class="p"> </i><i class="p"> </i></div>
<div class="t hx" style="left:4px;top:336px"><span style="color:#3030ff"><i class="d">0</i><i style="transform:translateX(-0.5px) scaleX(0.66)">A</i><i style="transform:translateX(-0.5px) scaleX(0.72)">C</i><i class="d">7</i><i style="transform:translateX(-0.5px) scaleX(0.68)">D</i><i style="transform:translateX(-0.5px) scaleX(0.72)">C</i><i style="transform:translateX(-0.5px) scaleX(0.78)">F</i><i class="d">3</i><i style="transform:translateX(-0.5px) scaleX(0.7)">B</i><i class="d">0</i></span><i> </i><i class="d">0</i><i class="d">0</i><i> </i><i class="d">0</i><i class="d">0</i><i> </i><i class="d">0</i><i class="d">0</i><i> </i><i class="d">0</i><i class="d">0</i><i> </i><i class="d">0</i><i class="d">0</i><i> </i><i class="d">0</i><i class="d">0</i><i> </i><i class="d">0</i><i class="d">0</i><i> </i><i class="d">0</i><i class="d">0</i><i> </i><i class="d">0</i><i class="d">0</i><i> </i><i class="d">0</i><i class="d">0</i><i> </i><i class="d">0</i><i class="d">0</i><i> </i><i class="d">0</i><i class="d">0</i><i> </i><i class="d">0</i><i class="d">0</i><i> </i><i class="d">0</i><i class="d">0</i><i> </i><i class="d">0</i><i class="d">0</i><i> </i><i class="d">0</i><i class="d">0</i><i> </i><i class="p"> </i><i class="p"> </i><i class="p"> </i><i class="p"> </i><i class="p"> </i><i class="p"> </i><i class="p"> </i><i class="p"> </i><i class="p"> </i><i class="p"> </i><i class="p"> </i><i class="p"> </i><i class="p"> </i><i class="p"> </i><i class="p"> </i><i class="p"> </i></div>
<div class="t hx" style="left:4px;top:353px"><span style="color:#3030ff"><i class="d">0</i><i style="transform:translateX(-0.5px) scaleX(0.66)">A</i><i style="transform:translateX(-0.5px) scaleX(0.72)">C</i><i class="d">7</i><i style="transform:translateX(-0.5px) scaleX(0.68)">D</i><i style="transform:translateX(-0.5px) scaleX(0.72)">C</i><i style="transform:translateX(-0.5px) scaleX(0.78)">F</i><i class="d">3</i><i style="transform:translateX(-0.5px) scaleX(0.72)">C</i><i class="d">0</i></span><i> </i><i class="d">0</i><i class="d">0</i><i> </i><i class="d">0</i><i class="d">0</i><i> </i><i class="d">0</i><i class="d">0</i><i> </i><i class="d">0</i><i class="d">0</i><i> </i><i class="d">0</i><i class="d">0</i><i> </i><i class="d">0</i><i class="d">0</i><i> </i><i class="d">0</i><i class="d">0</i><i> </i><i class="d">0</i><i class="d">0</i><i> </i><i class="d">0</i><i class="d">0</i><i> </i><i class="d">0</i><i class="d">0</i><i> </i><i class="d">0</i><i class="d">0</i><i> </i><i class="d">0</i><i class="d">0</i><i> </i><i class="d">0</i><i class="d">0</i><i> </i><i class="d">0</i><i class="d">0</i><i> </i><i class="d">0</i><i class="d">0</i><i> </i><i class="d">0</i><i class="d">0</i><i> </i><i class="p"> </i><i class="p"> </i><i class="p"> </i><i class="p"> </i><i class="p"> </i><i class="p"> </i><i class="p"> </i><i class="p"> </i><i class="p"> </i><i class="p"> </i><i class="p"> </i><i class="p"> </i><i class="p"> </i><i class="p"> </i><i class="p"> </i><i class="p"> </i></div>
<div class="t hx" style="left:4px;top:370px"><span style="color:#3030ff"><i class="d">0</i><i style="transform:translateX(-0.5px) scaleX(0.66)">A</i><i style="transform:translateX(-0.5px) scaleX(0.72)">C</i><i class="d">7</i><i style="transform:translateX(-0.5px) scaleX(0.68)">D</i><i style="transform:translateX(-0.5px) scaleX(0.72)">C</i><i style="transform:translateX(-0.5px) scaleX(0.78)">F</i><i class="d">3</i><i style="transform:translateX(-0.5px) scaleX(0.68)">D</i><i class="d">0</i></span><i> </i><i class="d">0</i><i class="d">0</i><i> </i><i class="d">0</i><i class="d">0</i><i> </i><i class="d">0</i><i class="d">0</i><i> </i><i class="d">0</i><i class="d">0</i><i> </i><i class="d">0</i><i class="d">0</i><i> </i><i class="d">0</i><i class="d">0</i><i> </i><i class="d">0</i><i class="d">0</i><i> </i><i class="d">0</i><i class="d">0</i><i> </i><i class="d">0</i><i class="d">0</i><i> </i><i class="d">0</i><i class="d">0</i><i> </i><i class="d">0</i><i class="d">0</i><i> </i><i class="d">0</i><i class="d">0</i><i> </i><i class="d">0</i><i class="d">0</i><i> </i><i class="d">0</i><i class="d">0</i><i> </i><i class="d">0</i><i class="d">0</i><i> </i><i class="d">0</i><i class="d">0</i><i> </i><i class="p"> </i><i class="p"> </i><i class="p"> </i><i class="p"> </i><i class="p"> </i><i class="p"> </i><i class="p"> </i><i class="p"> </i><i class="p"> </i><i class="p"> </i><i class="p"> </i><i class="p"> </i><i class="p"> </i><i class="p"> </i><i class="p"> </i><i class="p"> </i></div>
<div class="t hx" style="left:4px;top:387px"><span style="color:#3030ff"><i class="d">0</i><i style="transform:translateX(-0.5px) scaleX(0.66)">A</i><i style="transform:translateX(-0.5px) scaleX(0.72)">C</i><i class="d">7</i><i style="transform:translateX(-0.5px) scaleX(0.68)">D</i><i style="transform:translateX(-0.5px) scaleX(0.72)">C</i><i style="transform:translateX(-0.5px) scaleX(0.78)">F</i><i class="d">3</i><i style="transform:translateX(-0.5px) scaleX(0.72)">E</i><i class="d">0</i></span><i> </i><i class="d">0</i><i class="d">0</i><i> </i><i class="d">0</i><i class="d">0</i><i> </i><i class="d">0</i><i class="d">0</i><i> </i><i class="d">0</i><i class="d">0</i><i> </i><i class="d">0</i><i class="d">0</i><i> </i><i class="d">0</i><i class="d">0</i><i> </i><i class="d">0</i><i class="d">0</i><i> </i><i class="d">0</i><i class="d">0</i><i> </i><i class="d">0</i><i class="d">0</i><i> </i><i class="d">0</i><i class="d">0</i><i> </i><i class="d">0</i><i class="d">0</i><i> </i><i class="d">0</i><i class="d">0</i><i> </i><i class="d">0</i><i class="d">0</i><i> </i><i class="d">0</i><i class="d">0</i><i> </i><i class="d">0</i><i class="d">0</i><i> </i><i class="d">0</i><i class="d">0</i><i> </i><i class="p"> </i><i class="p"> </i><i class="p"> </i><i class="p"> </i><i class="p"> </i><i class="p"> </i><i class="p"> </i><i class="p"> </i><i class="p"> </i><i class="p"> </i><i class="p"> </i><i class="p"> </i><i class="p"> </i><i class="p"> </i><i class="p"> </i><i class="p"> </i></div>
<div class="t hx" style="left:4px;top:404px"><span style="color:#3030ff"><i class="d">0</i><i style="transform:translateX(-0.5px) scaleX(0.66)">A</i><i style="transform:translateX(-0.5px) scaleX(0.72)">C</i><i class="d">7</i><i style="transform:translateX(-0.5px) scaleX(0.68)">D</i><i style="transform:translateX(-0.5px) scaleX(0.72)">C</i><i style="transform:translateX(-0.5px) scaleX(0.78)">F</i><i class="d">3</i><i style="transform:translateX(-0.5px) scaleX(0.78)">F</i><i class="d">0</i></span><i> </i><i class="d">0</i><i class="d">0</i><i> </i><i class="d">0</i><i class="d">0</i><i> </i><i class="d">0</i><i class="d">0</i><i> </i><i class="d">0</i><i class="d">0</i><i> </i><i class="d">0</i><i class="d">0</i><i> </i><i class="d">0</i><i class="d">0</i><i> </i><i class="d">0</i><i class="d">0</i><i> </i><i class="d">0</i><i class="d">0</i><i> </i><i class="d">0</i><i class="d">0</i><i> </i><i class="d">0</i><i class="d">0</i><i> </i><i class="d">0</i><i class="d">0</i><i> </i><i class="d">0</i><i class="d">0</i><i> </i><i class="d">0</i><i class="d">0</i><i> </i><i class="d">0</i><i class="d">0</i><i> </i><i class="d">0</i><i class="d">0</i><i> </i><i class="d">0</i><i class="d">0</i><i> </i><i class="p"> </i><i class="p"> </i><i class="p"> </i><i class="p"> </i><i class="p"> </i><i class="p"> </i><i class="p"> </i><i class="p"> </i><i class="p"> </i><i class="p"> </i><i class="p"> </i><i class="p"> </i><i class="p"> </i><i class="p"> </i><i class="p"> </i><i class="p"> </i></div>
<div class="t hx" style="left:4px;top:421px"><span style="color:#3030ff"><i class="d">0</i><i style="transform:translateX(-0.5px) scaleX(0.66)">A</i><i style="transform:translateX(-0.5px) scaleX(0.72)">C</i><i class="d">7</i><i style="transform:translateX(-0.5px) scaleX(0.68)">D</i><i style="transform:translateX(-0.5px) scaleX(0.72)">C</i><i style="transform:translateX(-0.5px) scaleX(0.78)">F</i><i class="d">4</i><i class="d">0</i><i class="d">0</i></span><i> </i><i class="d">0</i><i class="d">0</i><i> </i><i class="d">0</i><i class="d">0</i><i> </i><i class="d">0</i><i class="d">0</i><i> </i><i class="d">0</i><i class="d">0</i><i> </i><i class="d">0</i><i class="d">0</i><i> </i><i class="d">0</i><i class="d">0</i><i> </i><i class="d">0</i><i class="d">0</i><i> </i><i class="d">0</i><i class="d">0</i><i> </i><i class="d">0</i><i class="d">0</i><i> </i><i class="d">0</i><i class="d">0</i><i> </i><i class="d">0</i><i class="d">0</i><i> </i><i class="d">0</i><i class="d">0</i><i> </i><i class="d">0</i><i class="d">0</i><i> </i><i class="d">0</i><i class="d">0</i><i> </i><i class="d">0</i><i class="d">0</i><i> </i><i class="d">0</i><i class="d">0</i><i> </i><i class="p"> </i><i class="p"> </i><i class="p"> </i><i class="p"> </i><i class="p"> </i><i class="p"> </i><i class="p"> </i><i class="p"> </i><i class="p"> </i><i class="p"> </i><i class="p"> </i><i class="p"> </i><i class="p"> </i><i class="p"> </i><i class="p"> </i><i class="p"> </i></div>
<div class="t hx" style="left:4px;top:438px"><span style="color:#3030ff"><i class="d">0</i><i style="transform:translateX(-0.5px) scaleX(0.66)">A</i><i style="transform:translateX(-0.5px) scaleX(0.72)">C</i><i class="d">7</i><i style="transform:translateX(-0.5px) scaleX(0.68)">D</i><i style="transform:translateX(-0.5px) scaleX(0.72)">C</i><i style="transform:translateX(-0.5px) scaleX(0.78)">F</i><i class="d">4</i><i class="d">1</i><i class="d">0</i></span><i> </i><i class="d">0</i><i class="d">0</i><i> </i><i class="d">0</i><i class="d">0</i><i> </i><i class="d">0</i><i class="d">0</i><i> </i><i class="d">0</i><i class="d">0</i><i> </i><i class="d">0</i><i class="d">0</i><i> </i><i class="d">0</i><i class="d">0</i><i> </i><i class="d">0</i><i class="d">0</i><i> </i><i class="d">0</i><i class="d">0</i><i> </i><i class="d">0</i><i class="d">0</i><i> </i><i class="d">0</i><i class="d">0</i><i> </i><i class="d">0</i><i class="d">0</i><i> </i><i class="d">0</i><i class="d">0</i><i> </i><i class="d">0</i><i class="d">0</i><i> </i><i class="d">0</i><i class="d">0</i><i> </i><i class="d">0</i><i class="d">0</i><i> </i><i class="d">0</i><i class="d">0</i><i> </i><i class="p"> </i><i class="p"> </i><i class="p"> </i><i class="p"> </i><i class="p"> </i><i class="p"> </i><i class="p"> </i><i class="p"> </i><i class="p"> </i><i class="p"> </i><i class="p"> </i><i class="p"> </i><i class="p"> </i><i class="p"> </i><i class="p"> </i><i class="p"> </i></div>
<div class="t hx" style="left:4px;top:455px"><span style="color:#3030ff"><i class="d">0</i><i style="transform:translateX(-0.5px) scaleX(0.66)">A</i><i style="transform:translateX(-0.5px) scaleX(0.72)">C</i><i class="d">7</i><i style="transform:translateX(-0.5px) scaleX(0.68)">D</i><i style="transform:translateX(-0.5px) scaleX(0.72)">C</i><i style="transform:translateX(-0.5px) scaleX(0.78)">F</i><i class="d">4</i><i class="d">2</i><i class="d">0</i></span><i> </i><i class="d">0</i><i class="d">0</i><i> </i><i class="d">0</i><i class="d">0</i><i> </i><i class="d">0</i><i class="d">0</i><i> </i><i class="d">0</i><i class="d">0</i><i> </i><i class="d">0</i><i class="d">0</i><i> </i><i class="d">0</i><i class="d">0</i><i> </i><i class="d">0</i><i class="d">0</i><i> </i><i class="d">0</i><i class="d">0</i><i> </i><i class="d">0</i><i class="d">0</i><i> </i><i class="d">0</i><i class="d">0</i><i> </i><i class="d">0</i><i class="d">0</i><i> </i><i class="d">0</i><i class="d">0</i><i> </i><i class="d">0</i><i class="d">0</i><i> </i><i class="d">0</i><i class="d">0</i><i> </i><i class="d">0</i><i class="d">0</i><i> </i><i class="d">0</i><i class="d">0</i><i> </i><i class="p"> </i><i class="p"> </i><i class="p"> </i><i class="p"> </i><i class="p"> </i><i class="p"> </i><i class="p"> </i><i class="p"> </i><i class="p"> </i><i class="p"> </i><i class="p"> </i><i class="p"> </i><i class="p"> </i><i class="p"> </i><i class="p"> </i><i class="p"> </i></div>
<div class="t hx" style="left:4px;top:472px"><span style="color:#3030ff"><i class="d">0</i><i style="transform:translateX(-0.5px) scaleX(0.66)">A</i><i style="transform:translateX(-0.5px) scaleX(0.72)">C</i><i class="d">7</i><i style="transform:translateX(-0.5px) scaleX(0.68)">D</i><i style="transform:translateX(-0.5px) scaleX(0.72)">C</i><i style="transform:translateX(-0.5px) scaleX(0.78)">F</i><i class="d">4</i><i class="d">3</i><i class="d">0</i></span><i> </i><i class="d">0</i><i class="d">0</i><i> </i><i class="d">0</i><i class="d">0</i><i> </i><i class="d">0</i><i class="d">0</i><i> </i><i class="d">0</i><i class="d">0</i><i> </i><i class="d">0</i><i class="d">0</i><i> </i><i class="d">0</i><i class="d">0</i><i> </i><i class="d">0</i><i class="d">0</i><i> </i><i class="d">0</i><i class="d">0</i><i> </i><i class="d">1</i><i class="d">0</i><i> </i><i class="d">0</i><i class="d">0</i><i> </i><i class="d">0</i><i class="d">0</i><i> </i><i class="d">0</i><i class="d">0</i><i> </i><i class="d">0</i><i class="d">0</i><i> </i><i class="d">0</i><i class="d">0</i><i> </i><i class="d">0</i><i class="d">0</i><i> </i><i class="d">0</i><i class="d">0</i><i> </i><i class="p"> </i><i class="p"> </i><i class="p"> </i><i class="p"> </i><i class="p"> </i><i class="p"> </i><i class="p"> </i><i class="p"> </i><i class="p"> </i><i class="p"> </i><i class="p"> </i><i class="p"> </i><i class="p"> </i><i class="p"> </i><i class="p"> </i><i class="p"> </i></div>
<div class="t hx" style="left:4px;top:489px"><span style="color:#3030ff"><i class="d">0</i><i style="transform:translateX(-0.5px) scaleX(0.66)">A</i><i style="transform:translateX(-0.5px) scaleX(0.72)">C</i><i class="d">7</i><i style="transform:translateX(-0.5px) scaleX(0.68)">D</i><i style="transform:translateX(-0.5px) scaleX(0.72)">C</i><i style="transform:translateX(-0.5px) scaleX(0.78)">F</i><i class="d">4</i><i class="d">4</i><i class="d">0</i></span><i> </i><i class="d">0</i><i class="d">0</i><i> </i><i class="d">0</i><i class="d">0</i><i> </i><i class="d">0</i><i class="d">0</i><i> </i><i class="d">0</i><i class="d">0</i><i> </i><i class="d">0</i><i class="d">0</i><i> </i><i class="d">0</i><i class="d">0</i><i> </i><i class="d">0</i><i class="d">0</i><i> </i><i class="d">0</i><i class="d">0</i><i> </i><i class="d">4</i><i class="d">8</i><i> </i><i class="d">0</i><i class="d">0</i><i> </i><i class="d">0</i><i class="d">0</i><i> </i><i class="d">0</i><i class="d">0</i><i> </i><i class="d">0</i><i class="d">0</i><i> </i><i class="d">0</i><i class="d">0</i><i> </i><i class="d">0</i><i class="d">0</i><i> </i><i class="d">0</i><i class="d">0</i><i> </i><i class="p"> </i><i class="p"> </i><i class="p"> </i><i class="p"> </i><i class="p"> </i><i class="p"> </i><i class="p"> </i><i class="p"> </i><i class="p"> </i><i class="p"> </i><i class="p"> </i><i class="p"> </i><i class="p"> </i><i class="p"> </i><i class="p"> </i><i class="p"> </i></div>
<div class="t hx" style="left:4px;top:506px"><span style="color:#3030ff"><i class="d">0</i><i style="transform:translateX(-0.5px) scaleX(0.66)">A</i><i style="transform:translateX(-0.5px) scaleX(0.72)">C</i><i class="d">7</i><i style="transform:translateX(-0.5px) scaleX(0.68)">D</i><i style="transform:translateX(-0.5px) scaleX(0.72)">C</i><i style="transform:translateX(-0.5px) scaleX(0.78)">F</i><i class="d">4</i><i class="d">5</i><i class="d">0</i></span><i> </i><i class="d">0</i><i class="d">2</i><i> </i><i class="d">3</i><i style="transform:translateX(-0.5px) scaleX(0.68)">D</i><i> </i><i style="transform:translateX(-0.5px) scaleX(0.78)">F</i><i style="transform:translateX(-0.5px) scaleX(0.72)">E</i><i> </i><i class="d">9</i><i class="d">6</i><i> </i><i class="d">0</i><i style="transform:translateX(-0.5px) scaleX(0.78)">F</i><i> </i><i style="transform:translateX(-0.5px) scaleX(0.68)">D</i><i style="transform:translateX(-0.5px) scaleX(0.72)">E</i><i> </i><i style="transform:translateX(-0.5px) scaleX(0.68)">D</i><i class="d">4</i><i> </i><i class="d">0</i><i class="d">1</i><i> </i><i style="transform:translateX(-0.5px) scaleX(0.7)">B</i><i class="d">5</i><i> </i><i class="d">6</i><i class="d">3</i><i> </i><i style="transform:translateX(-0.5px) scaleX(0.68)">D</i><i class="d">4</i><i> </i><i class="d">0</i><i class="d">1</i><i> </i><i class="d">0</i><i class="d">0</i><i> </i><i class="d">0</i><i class="d">0</i><i> </i><i class="d">0</i><i class="d">0</i><i> </i><i class="d">0</i><i class="d">0</i><i> </i><i class="p"> </i><i class="p"> </i><i class="p"> </i><i class="p"> </i><i class="p"> </i><i class="p"> </i><i class="p"> </i><i class="p"> </i><i class="p"> </i><i class="p"> </i><i class="p"> </i><i class="p"> </i><i class="p"> </i><i class="p"> </i><i class="p"> </i><i class="p"> </i></div>
<div class="t hx" style="left:4px;top:523px"><span style="color:#3030ff"><i class="d">0</i><i style="transform:translateX(-0.5px) scaleX(0.66)">A</i><i style="transform:translateX(-0.5px) scaleX(0.72)">C</i><i class="d">7</i><i style="transform:translateX(-0.5px) scaleX(0.68)">D</i><i style="transform:translateX(-0.5px) scaleX(0.72)">C</i><i style="transform:translateX(-0.5px) scaleX(0.78)">F</i><i class="d">4</i><i class="d">6</i><i class="d">0</i></span><i> </i><i class="d">4</i><i class="d">4</i><i> </i><i style="transform:translateX(-0.5px) scaleX(0.72)">E</i><i class="d">9</i><i> </i><i class="d">0</i><i class="d">4</i><i> </i><i class="d">0</i><i class="d">3</i><i> </i><i style="transform:translateX(-0.5px) scaleX(0.78)">F</i><i style="transform:translateX(-0.5px) scaleX(0.72)">E</i><i> </i><i class="d">2</i><i class="d">8</i><i> </i><i style="transform:translateX(-0.5px) scaleX(0.68)">D</i><i class="d">6</i><i> </i><i class="d">0</i><i class="d">1</i><i> </i><i style="transform:translateX(-0.5px) scaleX(0.7)">B</i><i class="d">5</i><i> </i><i class="d">6</i><i class="d">3</i><i> </i><i style="transform:translateX(-0.5px) scaleX(0.68)">D</i><i class="d">4</i><i> </i><i class="d">0</i><i class="d">1</i><i> </i><i class="d">0</i><i class="d">0</i><i> </i><i class="d">0</i><i class="d">0</i><i> </i><i class="d">0</i><i class="d">0</i><i> </i><i class="d">0</i><i class="d">0</i><i> </i><i class="p"> </i><i class="p"> </i><i class="p"> </i><i class="p"> </i><i class="p"> </i><i class="p"> </i><i class="p"> </i><i class="p"> </i><i class="p"> </i><i class="p"> </i><i class="p"> </i><i class="p"> </i><i class="p"> </i><i class="p"> </i><i class="p"> </i><i class="p"> </i></div>
<div class="t hx" style="left:4px;top:540px"><span style="color:#3030ff"><i class="d">0</i><i style="transform:translateX(-0.5px) scaleX(0.66)">A</i><i style="transform:translateX(-0.5px) scaleX(0.72)">C</i><i class="d">7</i><i style="transform:translateX(-0.5px) scaleX(0.68)">D</i><i style="transform:translateX(-0.5px) scaleX(0.72)">C</i><i style="transform:translateX(-0.5px) scaleX(0.78)">F</i><i class="d">4</i><i class="d">7</i><i class="d">0</i></span><i> </i><i class="d">0</i><i class="d">0</i><i> </i><i class="d">0</i><i class="d">0</i><i> </i><i class="d">0</i><i class="d">0</i><i> </i><i class="d">0</i><i class="d">0</i><i> </i><i class="d">0</i><i class="d">0</i><i> </i><i class="d">0</i><i class="d">0</i><i> </i><i class="d">0</i><i class="d">0</i><i> </i><i class="d">0</i><i class="d">0</i><i> </i><i class="d">0</i><i class="d">0</i><i> </i><i class="d">0</i><i class="d">0</i><i> </i><i class="d">0</i><i class="d">0</i><i> </i><i class="d">0</i><i class="d">0</i><i> </i><i class="d">0</i><i class="d">0</i><i> </i><i class="d">0</i><i class="d">0</i><i> </i><i class="d">0</i><i class="d">0</i><i> </i><i class="d">0</i><i class="d">0</i><i> </i><i class="p"> </i><i class="p"> </i><i class="p"> </i><i class="p"> </i><i class="p"> </i><i class="p"> </i><i class="p"> </i><i class="p"> </i><i class="p"> </i><i class="p"> </i><i class="p"> </i><i class="p"> </i><i class="p"> </i><i class="p"> </i><i class="p"> </i><i class="p"> </i></div>
<div class="t hx" style="left:4px;top:557px"><span style="color:#3030ff"><i class="d">0</i><i style="transform:translateX(-0.5px) scaleX(0.66)">A</i><i style="transform:translateX(-0.5px) scaleX(0.72)">C</i><i class="d">7</i><i style="transform:translateX(-0.5px) scaleX(0.68)">D</i><i style="transform:translateX(-0.5px) scaleX(0.72)">C</i><i style="transform:translateX(-0.5px) scaleX(0.78)">F</i><i class="d">4</i><i class="d">8</i><i class="d">0</i></span><i> </i><i class="d">0</i><i class="d">0</i><i> </i><i class="d">0</i><i class="d">0</i><i> </i><i class="d">0</i><i class="d">0</i><i> </i><i class="d">0</i><i class="d">0</i><i> </i><i class="d">0</i><i style="transform:translateX(-0.5px) scaleX(0.7)">B</i><i> </i><i class="d">0</i><i class="d">1</i><i> </i><i class="d">0</i><i class="d">0</i><i> </i><i class="d">0</i><i class="d">0</i><i> </i><i class="d">0</i><i class="d">0</i><i> </i><i class="d">0</i><i class="d">0</i><i> </i><i class="d">0</i><i class="d">0</i><i> </i><i class="d">0</i><i class="d">0</i><i> </i><i class="d">0</i><i class="d">0</i><i> </i><i class="d">0</i><i class="d">0</i><i> </i><i class="d">0</i><i class="d">0</i><i> </i><i class="d">0</i><i class="d">0</i><i> </i><i class="p"> </i><i class="p"> </i><i class="p"> </i><i class="p"> </i><i class="p"> </i><i class="p"> </i><i class="p"> </i><i class="p"> </i><i class="p"> </i><i class="p"> </i><i class="p"> </i><i class="p"> </i><i class="p"> </i><i class="p"> </i><i class="p"> </i><i class="p"> </i></div>
<div class="t hx" style="left:4px;top:574px"><span style="color:#3030ff"><i class="d">0</i><i style="transform:translateX(-0.5px) scaleX(0.66)">A</i><i style="transform:translateX(-0.5px) scaleX(0.72)">C</i><i class="d">7</i><i style="transform:translateX(-0.5px) scaleX(0.68)">D</i><i style="transform:translateX(-0.5px) scaleX(0.72)">C</i><i style="transform:translateX(-0.5px) scaleX(0.78)">F</i><i class="d">4</i><i class="d">9</i><i class="d">0</i></span><i> </i><i class="d">7</i><i class="d">8</i><i> </i><i class="d">5</i><i style="transform:translateX(-0.5px) scaleX(0.7)">B</i><i> </i><i style="transform:translateX(-0.5px) scaleX(0.7)">B</i><i class="d">5</i><i> </i><i class="d">0</i><i style="transform:translateX(-0.5px) scaleX(0.78)">F</i><i> </i><i class="d">0</i><i class="d">2</i><i> </i><i class="d">0</i><i class="d">0</i><i> </i><i class="d">0</i><i class="d">0</i><i> </i><i class="d">0</i><i class="d">0</i><i> </i><i class="d">3</i><i class="d">0</i><i> </i><i class="d">0</i><i class="d">0</i><i> </i><i class="d">0</i><i class="d">0</i><i> </i><i class="d">0</i><i class="d">0</i><i> </i><i class="d">7</i><i class="d">0</i><i> </i><i class="d">0</i><i class="d">0</i><i> </i><i class="d">0</i><i class="d">0</i><i> </i><i class="d">0</i><i class="d">0</i><i> </i><i style="transform:translateX(-0.5px) scaleX(0.7)">x</i><i style="transform:translateX(-0.5px) scaleX(1)">[</i><i style="transform:translateX(-0.5px) scaleX(0.8)">µ</i><i class="p"> </i><i class="p"> </i><i class="p"> </i><i class="p"> </i><i class="p"> </i><i class="d">0</i><i class="p"> </i><i class="p"> </i><i class="p"> </i><i style="transform:translateX(-0.5px) scaleX(0.75)">p</i><i class="p"> </i><i class="p"> </i><i class="p"> </i></div>
<div class="t hx" style="left:4px;top:591px"><span style="color:#3030ff"><i class="d">0</i><i style="transform:translateX(-0.5px) scaleX(0.66)">A</i><i style="transform:translateX(-0.5px) scaleX(0.72)">C</i><i class="d">7</i><i style="transform:translateX(-0.5px) scaleX(0.68)">D</i><i style="transform:translateX(-0.5px) scaleX(0.72)">C</i><i style="transform:translateX(-0.5px) scaleX(0.78)">F</i><i class="d">4</i><i style="transform:translateX(-0.5px) scaleX(0.66)">A</i><i class="d">0</i></span><i> </i><i class="d">0</i><i class="d">0</i><i> </i><i class="d">0</i><i class="d">0</i><i> </i><i class="d">0</i><i class="d">0</i><i> </i><i class="d">0</i><i class="d">0</i><i> </i><i class="d">0</i><i class="d">0</i><i> </i><i class="d">0</i><i class="d">0</i><i> </i><i class="d">0</i><i class="d">3</i><i> </i><i class="d">0</i><i class="d">0</i><i> </i><i class="d">5</i><i class="d">2</i><i> </i><i class="d">0</i><i class="d">0</i><i> </i><i class="d">0</i><i class="d">0</i><i> </i><i class="d">0</i><i class="d">0</i><i> </i><i class="d">1</i><i class="d">8</i><i> </i><i class="d">0</i><i class="d">0</i><i> </i><i class="d">0</i><i class="d">1</i><i> </i><i class="d">0</i><i class="d">0</i><i> </i><i class="p"> </i><i class="p"> </i><i class="p"> </i><i class="p"> </i><i class="p"> </i><i class="p"> </i><i class="p"> </i><i class="p"> </i><i style="transform:translateX(-0.5px) scaleX(0.62)">R</i><i class="p"> </i><i class="p"> </i><i class="p"> </i><i class="p"> </i><i class="p"> </i><i class="p"> </i><i class="p"> </i></div>
<div class="a" style="left:56px;top:115px;width:287px;height:365px;background:#fcfcf0;border:1px solid #979797;box-shadow:2px 2px 2px rgba(0,0,0,0.35)"></div>
<div class="a" style="left:57px;top:116px;width:285px;height:363px;border:2px solid #f4f4f4"></div>
<div class="a" style="left:59px;top:118px;width:22px;height:359px;background:#d2e6fb"></div>
<div class="a" style="left:59px;top:346px;width:280px;height:22px;border:1px solid #c4ccd6;background:linear-gradient(#f2f8fe 0px,#e4effc 2px,#d4e6fb 6px,#bdd8f8 7px,#b6d4f7 12px,#cfe2f9 13.5px,#d6e7fa 20px)"></div>
<div class="t" style="left:89px;top:123px;font-size:13px;color:#a0a0a0;letter-spacing:-0.5px">Preview(<u>P</u>)</div>
<div class="a" style="left:89px;top:144px;width:252px;height:1px;background:#c5c5c5"></div>
<div class="a" style="left:89px;top:145px;width:252px;height:1px;background:#fff"></div>
<div class="t" style="left:89px;top:155px;font-size:13px;color:#000;letter-spacing:-0.3px">Copy To(<u>S</u>)...</div>
<div class="t" style="left:89px;top:177px;font-size:13px;color:#000;letter-spacing:0px">Copy To "Desktop"(<u>D</u>)</div>
<div class="t" style="left:89px;top:199px;font-size:13px;color:#000;letter-spacing:0.08px">Copy To "My Documents"(<u>M</u>)</div>
<div class="a" style="left:89px;top:220px;width:252px;height:1px;background:#c5c5c5"></div>
<div class="a" style="left:89px;top:221px;width:252px;height:1px;background:#fff"></div>
<div class="t" style="left:89px;top:231px;font-size:13px;color:#a0a0a0;letter-spacing:0px">New Folder(<u>N</u>)</div>
<div class="t" style="left:89px;top:253px;font-size:13px;color:#a0a0a0;letter-spacing:-0.36px">Rename (<u>R</u>)</div>
<div class="t" style="left:89px;top:275px;font-size:13px;color:#a0a0a0;letter-spacing:-0.06px">Copy Files To Current Partition(<u>W</u>)</div>
<div class="t" style="left:89px;top:297px;font-size:13px;color:#a0a0a0;letter-spacing:-0.23px">Delete Files Directly(<u>F</u>)</div>
<div class="t" style="left:89px;top:319px;font-size:13px;color:#a0a0a0;letter-spacing:-0.23px">Delete Files Permanently(<u>P</u>)</div>
<div class="a" style="left:89px;top:340px;width:252px;height:1px;background:#c5c5c5"></div>
<div class="a" style="left:89px;top:341px;width:252px;height:1px;background:#fff"></div>
<div class="t" style="left:89px;top:351px;font-size:13px;color:#000;letter-spacing:-0.1px">Go To File Data Sector</div>
<div class="t" style="left:89px;top:373px;font-size:13px;color:#000;letter-spacing:-0.11px">Show Occupied Clusters List</div>
<div class="t" style="left:89px;top:395px;font-size:13px;color:#000;letter-spacing:-0.07px">Show Root Directory's Clusters List</div>
<div class="t" style="left:89px;top:417px;font-size:13px;color:#000;letter-spacing:0px"><u>C</u>opy Text : "PerfLogs"</div>
<div class="t" style="left:89px;top:439px;font-size:13px;color:#000;letter-spacing:-0.25px">Select All(<u>A</u>)</div>
<div class="t" style="left:89px;top:461px;font-size:13px;color:#000;letter-spacing:-0.14px">Unselect All(<u>U</u>)</div>
<svg class="a" style="left:0;top:0" width="100" height="480">
<!-- copy to -->
<path d="M62.5 154.5h9l3 3v12h-12z" fill="#5b97cf" stroke="#4a86c0"/>
<path d="M71.5 154.5v3h3" fill="#8ab8e0" stroke="#4a86c0" stroke-width="0.6"/>
<path d="M67 163.5 L71 160.5 V162 H77.5 V165 H71 V166.5Z" fill="#f5a54a"/>
<!-- desktop -->
<rect x="61.5" y="177.5" width="16" height="12" fill="#1aa0f8" stroke="#1848a8"/>
<rect x="62" y="188" width="15" height="1.6" fill="#10308a"/>
<rect x="63" y="188.2" width="1.2" height="1.2" fill="#fff"/><rect x="74" y="188.2" width="1.2" height="1.2" fill="#fff"/><rect x="71" y="188.2" width="1.5" height="1.2" fill="#30a080"/>
<!-- folder -->
<path d="M61.5 200.5h5l1.5 1.5h9.5v10h-16z" fill="#f0c020"/>
<path d="M62 204h15v8.5h-15z" fill="#f5c830"/>
<path d="M63 203.5h13" stroke="#fff8d0" stroke-width="1"/>
<!-- pie disabled -->
<circle cx="70" cy="281.5" r="7.5" fill="#cbcbc3"/>
<path d="M70 281.5 L77.5 281.5 A7.5 7.5 0 0 0 70 274Z" fill="#dcdcd4"/>
<circle cx="66" cy="284" r="3" fill="#b8d0c8" opacity="0.6"/>
<!-- doc disabled -->
<path d="M62.5 296.5h9l3 3v12h-12z" fill="#a9cde3"/>
<path d="M64 302.5h7M64 305h7M64 307.5h5" stroke="#d8ecf6"/>
<rect x="70" y="304" width="6" height="8" fill="#c8c8c0"/>
<!-- basket disabled -->
<path d="M62 321.5h16v3h-16z" fill="#a0c8de"/>
<path d="M63.5 324.5h13l-1 8h-11z" fill="#98c2da"/>
<path d="M66 326v5M69 326v5M72 326v5M75 326v5" stroke="#c8e0ee"/>
<!-- check -->
<rect x="63" y="440" width="12" height="12" fill="none" stroke="#6a88d8" stroke-width="1.3"/>
<path d="M66 445.5 L69.5 449 L77.5 441" fill="none" stroke="#4a92d0" stroke-width="2.4"/>
</svg>
<svg class="a" style="left:329px;top:354px" width="5" height="8"><path d="M0 0 L5 4 L0 8Z" fill="#1a3a8a"/></svg>
<div class="a" style="left:338px;top:343px;width:329px;height:212px;background:#fcfcf0;border:1px solid #979797;box-shadow:2px 2px 2px rgba(0,0,0,0.35)"></div>
<div class="a" style="left:339px;top:344px;width:327px;height:210px;border:2px solid #f4f4f4"></div>
<div class="a" style="left:341px;top:346px;width:22px;height:206px;background:#d2e6fb"></div>
<div class="a" style="left:341px;top:346px;width:322px;height:22px;border:1px solid #c4ccd6;background:linear-gradient(#f2f8fe 0px,#e4effc 2px,#d4e6fb 6px,#bdd8f8 7px,#b6d4f7 12px,#cfe2f9 13.5px,#d6e7fa 20px)"></div>
<div class="t" style="left:371px;top:351px;font-size:13px;color:#000;letter-spacing:-0.09px">Beginning Sector Of File</div>
<div class="a" style="left:371px;top:372px;width:292px;height:1px;background:#c5c5c5"></div>
<div class="a" style="left:371px;top:373px;width:292px;height:1px;background:#fff"></div>
<div class="t" style="left:371px;top:383px;font-size:13px;color:#000;letter-spacing:-0.29px">File Record (NTFS)</div>
<div class="t" style="left:371px;top:405px;font-size:13px;color:#000;letter-spacing:-0.37px">File Index (NTFS)</div>
<div class="t" style="left:371px;top:427px;font-size:13px;color:#000;letter-spacing:-0.15px">Parent Directory File Record (NTFS)</div>
<div class="a" style="left:371px;top:448px;width:292px;height:1px;background:#c5c5c5"></div>
<div class="a" style="left:371px;top:449px;width:292px;height:1px;background:#fff"></div>
<div class="t" style="left:371px;top:459px;font-size:13px;color:#a0a0a0;letter-spacing:-0.23px">Directory Entry (FAT or exFAT)</div>
<div class="t" style="left:371px;top:481px;font-size:13px;color:#a0a0a0;letter-spacing:-0.15px">Sector Of Parent Directory (FAT or exFAT)</div>
<div class="a" style="left:371px;top:502px;width:292px;height:1px;background:#c5c5c5"></div>
<div class="a" style="left:371px;top:503px;width:292px;height:1px;background:#fff"></div>
<div class="t" style="left:371px;top:513px;font-size:13px;color:#a0a0a0;letter-spacing:-0.09px">iNode (EXT4)</div>
<div class="t" style="left:371px;top:535px;font-size:13px;color:#a0a0a0;letter-spacing:-0.19px">Directory Entry (EXT4)</div>
</body></html>
